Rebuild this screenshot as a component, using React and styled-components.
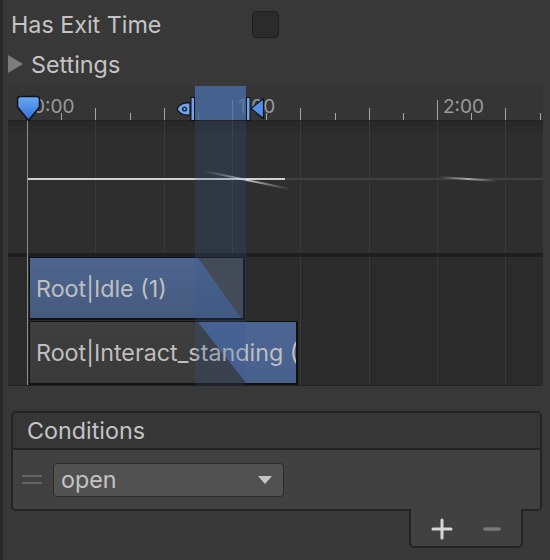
import React from "react";
import styled, { createGlobalStyle } from "styled-components";

const GlobalStyle = createGlobalStyle`
  html, body {
    margin: 0;
    background: #383838;
  }
  body {
    font-family: Inter, "Noto Sans", sans-serif;
  }
`;

// timeline geometry (px, relative to the timeline panel)
const PANEL_W = 535;
const ORIGIN = 19;
const MINUTE = 205;
const STEP = MINUTE / 6;
const TRANSITION = { from: 187, to: 238 };

const Page = styled.div`
  width: 550px;
  height: 560px;
  box-sizing: border-box;
  border-left: 3px solid #282828;
  padding: 5px 0 0 5px;
  color: #c4c4c4;
  font-size: 23.3px;
  line-height: 29px;
  overflow: hidden;
`;

const FieldRow = styled.div`
  display: flex;
  align-items: center;
  height: 38px;
`;

const FieldLabel = styled.div`
  width: 244px;
  padding-left: 3px;
  box-sizing: border-box;
`;

const Checkbox = styled.div`
  width: 27px;
  height: 27px;
  box-sizing: border-box;
  background: #2b2b2b;
  border: 1px solid #1e1e1e;
  border-radius: 4px;
`;

const Foldout = styled.div`
  display: flex;
  align-items: center;
  gap: 8px;
  height: 38px;
  margin-top: 2px;
`;

const FoldArrow = styled.span`
  width: 0;
  height: 0;
  border-top: 9px solid transparent;
  border-bottom: 9px solid transparent;
  border-left: 15px solid #7b7b7b;
`;

const Timeline = styled.div`
  position: relative;
  width: ${PANEL_W}px;
  margin-top: 3px;
  border-bottom: 1px solid #232323;
`;

const Ruler = styled.div`
  position: relative;
  height: 34px;
  background: #353535;
  border-bottom: 1px solid #232323;
`;

const RulerLabel = styled.span`
  position: absolute;
  top: 11px;
  font-size: 19px;
  line-height: 19px;
  color: #9b9b9b;
`;

const CurveArea = styled.div`
  height: 132px;
  background: linear-gradient(#272727, #2e2e2e 14px, #2e2e2e);
`;

const Separator = styled.div`
  height: 4px;
  background: #1f1f1f;
`;

const ClipArea = styled.div`
  position: relative;
  height: 128px;
  background: #2b2b2b;
  display: flex;
  flex-direction: column;
  gap: 1px;
`;

const Layer = styled.svg`
  position: absolute;
  left: 0;
  top: 0;
`;

const Clip = styled.div`
  position: relative;
  z-index: 1;
  margin-left: 21px;
  width: ${(p) => p.$width}px;
  height: ${(p) => p.$height}px;
  box-sizing: border-box;
  border: 1px solid #111;
  border-right-width: 2px;
  border-bottom-width: 2px;
  background: ${(p) =>
    p.$blueFirst
      ? "linear-gradient(#4d6590, #455a7e)"
      : "linear-gradient(#3e3e3e, #3a3a3a)"};
  color: #bfbfbf;
  padding-left: 6px;
  display: flex;
  align-items: center;
  white-space: nowrap;
  overflow: hidden;

  &::before {
    content: "";
    position: absolute;
    inset: 0;
    background: ${(p) =>
      p.$blueFirst ? "#474747" : "linear-gradient(#4c6593, #47608c)"};
    clip-path: ${(p) => p.$cut};
  }

  span {
    position: relative;
    flex-shrink: 0;
  }
`;

const TransitionBand = styled.div`
  position: absolute;
  z-index: 2;
  left: ${TRANSITION.from}px;
  width: ${TRANSITION.to - TRANSITION.from}px;
  top: ${(p) => (p.$ruler ? 0 : 35)}px;
  height: ${(p) => (p.$ruler ? 34 : 264)}px;
  background: ${(p) =>
    p.$ruler ? "rgba(74, 110, 168, 0.78)" : "rgba(55, 90, 150, 0.22)"};
  pointer-events: none;
`;

const PlayheadLine = styled.div`
  position: absolute;
  z-index: 2;
  left: ${ORIGIN}px;
  top: 30px;
  bottom: 0;
  width: 1px;
  background: #8c8c8c;
`;

const Marker = styled.svg`
  position: absolute;
  z-index: 3;
  left: ${(p) => p.$left}px;
  top: ${(p) => p.$top}px;
`;

const Conditions = styled.div`
  margin: 25px 0 0 3px;
  width: 531px;
  display: flex;
  flex-direction: column;
  align-items: flex-end;
`;

const ListBox = styled.div`
  width: 100%;
  box-sizing: border-box;
  border: 2px solid #242424;
  border-radius: 5px;
  overflow: hidden;
`;

const ListHeader = styled.div`
  height: 35px;
  padding-left: 14px;
  display: flex;
  align-items: center;
  background: #363636;
  border-bottom: 2px solid #242424;
`;

const ListBody = styled.div`
  height: 59px;
  background: #414141;
  display: flex;
  align-items: center;
  gap: 11px;
  padding-left: 9px;
`;

const DragHandle = styled.div`
  width: 20px;
  height: 9px;
  border-top: 2px solid #656565;
  border-bottom: 2px solid #656565;
  box-sizing: border-box;
`;

const Dropdown = styled.div`
  width: 231px;
  height: 34px;
  box-sizing: border-box;
  background: #515151;
  border: 1px solid #2a2a2a;
  border-radius: 4px;
  padding: 0 11px 0 7px;
  display: flex;
  align-items: center;
  justify-content: space-between;
`;

const Caret = styled.span`
  width: 0;
  height: 0;
  border-left: 7px solid transparent;
  border-right: 7px solid transparent;
  border-top: 8px solid #c4c4c4;
`;

const FooterTab = styled.div`
  position: relative;
  margin: -2px 19px 0 0;
  width: 114px;
  height: 39px;
  box-sizing: border-box;
  background: #414141;
  border: 2px solid #232323;
  border-top: none;
  border-radius: 0 0 5px 5px;
  display: flex;
  align-items: center;
  gap: 30px;
  padding: 2px 0 0 20px;
`;

const FooterButton = styled.svg`
  display: block;
`;

const ticks = Array.from({ length: 16 }, (_, i) => ({
  x: ORIGIN + i * STEP,
  kind: i % 6 === 0 ? "major" : i % 2 === 0 ? "mid" : "minor",
}));
const gridXs = ticks.filter((t, i) => i > 0 && t.kind !== "minor").map((t) => t.x);
const tickTop = { major: 14, mid: 22, minor: 27 };

const clips = [
  {
    name: "Root|Idle (1)",
    width: 216,
    height: 63,
    blueFirst: true,
    cut: "polygon(168px 0, 100% 0, 100% 100%, 211px 100%)",
  },
  {
    name: "Root|Interact_standing (1)",
    width: 269,
    height: 64,
    blueFirst: false,
    cut: "polygon(168px 0, 100% 0, 100% 100%, 216px 100%)",
  },
];

function GridLines({ height }) {
  return (
    <Layer width={PANEL_W} height={height}>
      {gridXs.map((x) => (
        <line key={x} x1={Math.round(x) + 0.5} x2={Math.round(x) + 0.5} y1="0" y2={height} stroke="#383838" />
      ))}
    </Layer>
  );
}

function CurvePlot() {
  return (
    <svg width={PANEL_W} height="132" style={{ display: "block" }}>
      <defs>
        <linearGradient id="fade" x1="0" x2="1" y1="0" y2="0">
          <stop offset="0" stopColor="#fff" stopOpacity="0" />
          <stop offset="0.5" stopColor="#fff" stopOpacity="0.7" />
          <stop offset="1" stopColor="#fff" stopOpacity="0" />
        </linearGradient>
      </defs>
      {gridXs.map((x) => (
        <line key={x} x1={Math.round(x) + 0.5} x2={Math.round(x) + 0.5} y1="0" y2="132" stroke="#393939" />
      ))}
      <line x1="277" x2={PANEL_W} y1="58" y2="58" stroke="#404040" strokeWidth="2" />
      <line x1={ORIGIN} x2="277" y1="58" y2="58" stroke="#cfcfcf" strokeWidth="2" />
      <line x1="195" x2="282" y1="50" y2="68" stroke="url(#fade)" strokeWidth="2" />
      <line x1="430" x2="490" y1="56" y2="60" stroke="url(#fade)" strokeWidth="2" opacity="0.8" />
    </svg>
  );
}

export default function App() {
  return (
    <>
      <GlobalStyle />
      <Page>
        <FieldRow>
          <FieldLabel>Has Exit Time</FieldLabel>
          <Checkbox />
        </FieldRow>
        <Foldout>
          <FoldArrow />
          Settings
        </Foldout>

        <Timeline>
          <Ruler>
            <svg width={PANEL_W} height="34" style={{ display: "block" }}>
              {ticks.map((t, i) => (
                <line
                  key={i}
                  x1={Math.round(t.x) + 0.5}
                  x2={Math.round(t.x) + 0.5}
                  y1={tickTop[t.kind]}
                  y2="34"
                  stroke="#a6a6a6"
                />
              ))}
            </svg>
            {["0:00", "1:00", "2:00"].map((label, i) => (
              <RulerLabel key={label} style={{ left: ORIGIN + 6 + i * MINUTE }}>
                {label}
              </RulerLabel>
            ))}
          </Ruler>
          <CurveArea>
            <CurvePlot />
          </CurveArea>
          <Separator />
          <ClipArea>
            <GridLines height={128} />
            {clips.map((c) => (
              <Clip key={c.name} $width={c.width} $height={c.height} $blueFirst={c.blueFirst} $cut={c.cut}>
                <span>{c.name}</span>
              </Clip>
            ))}
          </ClipArea>

          <TransitionBand $ruler />
          <TransitionBand />
          <PlayheadLine />

          <Marker $left={8} $top={9} width="25" height="27" viewBox="0 0 25 27">
            <defs>
              <linearGradient id="head" x1="0" x2="0" y1="0" y2="1">
                <stop offset="0" stopColor="#6aa8f4" />
                <stop offset="1" stopColor="#2d6fd6" />
              </linearGradient>
            </defs>
            <path
              d="M4.5 1.5 H20.5 Q23.5 1.5 23.5 4.5 V12 L12.5 25.5 L1.5 12 V4.5 Q1.5 1.5 4.5 1.5 Z"
              fill="url(#head)"
              stroke="#111"
              strokeWidth="1.5"
            />
          </Marker>

          <Marker $left={168} $top={11} width="20" height="24" viewBox="0 0 20 24">
            <path d="M1 12 C3 7.5 8 5.5 14 6 V18 C8 18.5 3 16.5 1 12 Z" fill="#6fa4ee" stroke="#111" strokeWidth="1.2" />
            <circle cx="8.5" cy="12" r="2.6" fill="#1b2a44" />
            <circle cx="8.5" cy="12" r="1" fill="#9cc2f5" />
            <rect x="15" y="0.5" width="3.5" height="23" fill="#6fa4ee" stroke="#111" strokeWidth="1" />
          </Marker>

          <Marker $left={238} $top={11} width="19" height="24" viewBox="0 0 19 24">
            <rect x="0.5" y="0.5" width="3.5" height="23" fill="#6fa4ee" stroke="#111" strokeWidth="1" />
            <path d="M5 11.5 L17.5 1.5 V21.5 Z" fill="#4f8fea" stroke="#111" strokeWidth="1.2" strokeLinejoin="round" />
          </Marker>
        </Timeline>

        <Conditions>
          <ListBox>
            <ListHeader>Conditions</ListHeader>
            <ListBody>
              <DragHandle />
              <Dropdown>
                open
                <Caret />
              </Dropdown>
            </ListBody>
          </ListBox>
          <FooterTab>
            <FooterButton width="22" height="22" viewBox="0 0 22 22">
              <path d="M11 2 V20 M2 11 H20" stroke="#d6d6d6" strokeWidth="3" strokeLinecap="round" />
            </FooterButton>
            <FooterButton width="18" height="22" viewBox="0 0 18 22">
              <path d="M2 11 H16" stroke="#787878" strokeWidth="3.5" strokeLinecap="round" />
            </FooterButton>
          </FooterTab>
        </Conditions>
      </Page>
    </>
  );
}
